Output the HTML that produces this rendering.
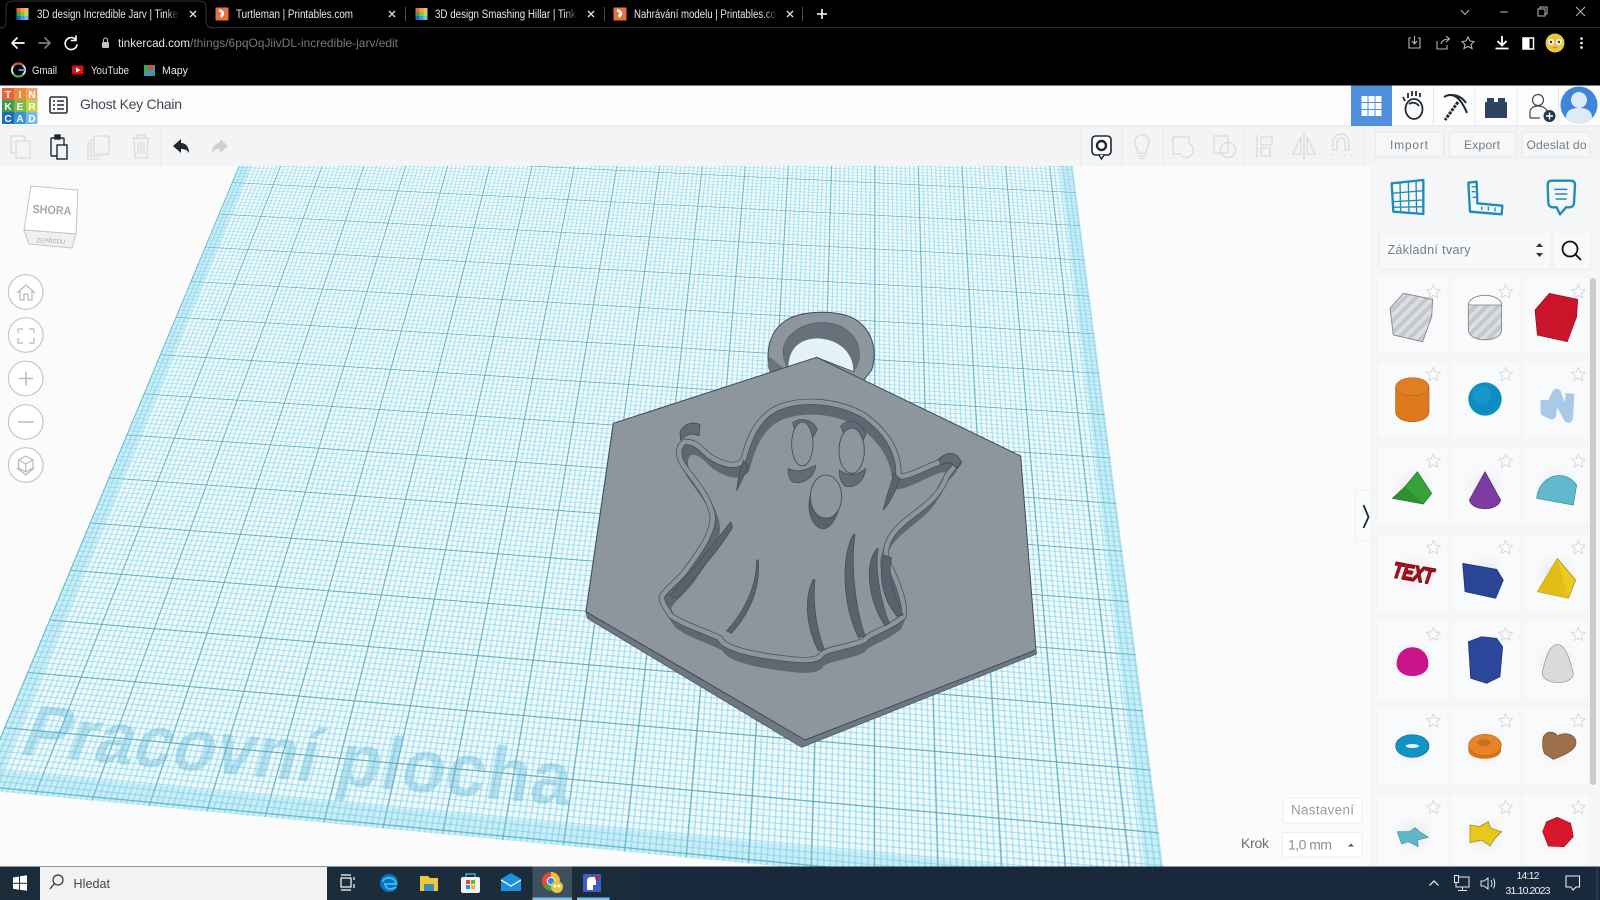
<!DOCTYPE html>
<html lang="cs"><head><meta charset="utf-8"><title>Ghost Key Chain</title>
<style>
html,body{margin:0;padding:0;width:1600px;height:900px;overflow:hidden;background:#fbfbfb;font-family:"Liberation Sans",sans-serif}
#wrap{position:absolute;left:0;top:0;width:1600px;height:900px;overflow:hidden;background:#fbfbfb}
#plane{position:absolute;left:0;top:0;width:2000px;height:2000px;transform-origin:0 0;
transform:matrix3d(.5484,.02106,0,-0.00003974,-.2452,.38066,0,-.00028,0,0,1,0,468.69,28.28,0,1.56);
background-color:#f4fbfd;
background-image:
linear-gradient(to right,rgba(70,160,178,.75) 0,rgba(70,160,178,.75) 2.2px,transparent 2.2px),
linear-gradient(to bottom,rgba(70,160,178,.75) 0,rgba(70,160,178,.75) 2.2px,transparent 2.2px),
linear-gradient(to right,rgba(110,205,230,.5) 0,rgba(110,205,230,.5) 2.4px,transparent 2.4px),
linear-gradient(to bottom,rgba(110,205,230,.5) 0,rgba(110,205,230,.5) 2.4px,transparent 2.4px);
background-size:102.4px 100px,102.4px 100px,10.24px 10px,10.24px 10px;
background-position:0 93px,0 93px,0 3px,0 3px}
.band{position:absolute;background:rgba(110,205,232,.3)}
#word{position:absolute;left:44px;top:1833px;font:bold 124px/124px "Liberation Sans",sans-serif;letter-spacing:1.5px;color:rgba(85,178,212,.36);white-space:nowrap}
svg#ui{position:absolute;left:0;top:0}
svg text{font-family:"Liberation Sans",sans-serif}
</style></head><body><div id="wrap">
<div id="plane">
<div class="band" style="left:0;top:0;width:30px;height:2000px"></div>
<div class="band" style="right:0;top:0;width:30px;height:2000px"></div>
<div class="band" style="left:0;bottom:0;width:2000px;height:34px"></div>
<div id="word">Pracovní plocha</div>
</div>
<svg id="ui" width="1600" height="900" viewBox="0 0 1600 900" xmlns="http://www.w3.org/2000/svg">
<defs>
<linearGradient id="fade"><stop offset="0" stop-color="#000" stop-opacity="0"/><stop offset="1" stop-color="#000"/></linearGradient>
<polygon id="st" points="0,-22 5.9,-8.1 20.9,-6.8 9.5,3.1 12.9,17.8 0,10 -12.9,17.8 -9.5,3.1 -20.9,-6.8 -5.9,-8.1" fill="#fbfbfb" stroke="#d8d9da" stroke-width="3"/>
<pattern id="stripe" width="24" height="24" patternUnits="userSpaceOnUse" patternTransform="rotate(45)"><rect width="24" height="24" fill="#dcdee0"/><rect width="12" height="24" fill="#c4c7cb"/></pattern>
<radialGradient id="blob"><stop offset="0" stop-color="#dfe1e2"/><stop offset="1" stop-color="#f8f9fa" stop-opacity="0"/></radialGradient>
<path id="ghost" fill="none" stroke-linejoin="round" d="M345,425 C325,435 320,465 340,495 C370,540 420,590 428,650 C430,700 385,760 345,815 C320,845 285,870 275,890 C275,915 295,930 300,945 C340,975 400,990 450,1015 C460,1045 550,1065 640,1075 C680,1080 730,1085 750,1070 C760,1045 830,1045 885,1020 C895,1000 960,985 1000,950 C1010,920 985,850 955,790 C935,745 960,700 1010,660 C1060,620 1110,590 1130,530 C1145,505 1160,495 1165,490 C1150,470 1120,480 1100,490 C1060,505 1020,530 985,530 C990,470 960,400 880,345 C810,305 700,290 620,325 C560,355 535,420 520,480 C500,505 460,495 420,470 C395,450 380,425 345,425 Z"/>
</defs>

<!-- PENDANT -->
<g transform="translate(570,300) scale(.33333)" stroke-linejoin="round">
<path d="M600,215 C585,150 600,90 650,60 C700,30 800,30 850,55 C905,85 925,150 905,210 L880,242 L600,215 Z" fill="#8d959d" stroke="#3f4b57" stroke-width="3"/>
<path d="M600,170 C590,190 590,205 605,220 L640,205Z" fill="#6b737d"/>
<path d="M640,155 C640,110 690,68 760,68 C820,68 868,110 868,165 C868,185 860,200 850,215 L740,172 L655,205 C645,190 640,175 640,155Z" fill="#e3f3f8" stroke="#3f4b57" stroke-width="2.500"/>
<path d="M640,155 C640,110 690,68 760,68 C820,68 868,110 868,165 C868,185 860,200 850,215 C852,170 820,120 745,115 C690,115 655,145 655,205 C645,190 640,175 640,155Z" fill="#68717b"/>
<polygon points="48,935 705,1320 1398,1050 1400,1062 695,1342 52,955" fill="#6f7781" stroke="#45515d" stroke-width="2"/>
<polygon points="740,172 1352,468 1398,1050 705,1320 48,935 130,370" fill="#8d959d" stroke="#3f4b57" stroke-width="3"/>
<g stroke="#5f6872" stroke-width="17">
<use href="#ghost" transform="translate(740,0) scale(.955,1) translate(-740,30)"/>
<use href="#ghost" transform="translate(740,0) scale(.97,1) translate(-740,20)"/>
<use href="#ghost" transform="translate(740,0) scale(.985,1) translate(-740,10)"/>
</g>
<use href="#ghost" stroke="#404b57" stroke-width="18"/>
<use href="#ghost" stroke="#8d959d" stroke-width="14"/>
<!-- hand ticks -->
<path d="M330,395 C345,368 370,365 390,373 L387,408 C370,398 350,400 332,420Z" fill="#626b75" stroke="#3f4b57" stroke-width="2.500"/>
<path d="M1105,478 C1130,455 1155,450 1174,485 L1160,505 C1145,485 1130,485 1115,495Z" fill="#626b75" stroke="#3f4b57" stroke-width="2.500"/>
<!-- inner strokes -->
<g fill="#5a636d" stroke="#3f4b57" stroke-width="2">
<path d="M500,572 C503,535 510,510 520,480 L535,500 C522,525 512,550 500,572Z"/>
<path d="M940,630 C948,590 962,555 972,520 L990,535 C978,572 962,605 940,630Z"/>
<path d="M482,665 C440,720 370,805 300,885 L322,895 C385,820 452,742 488,682Z"/>
<path d="M560,780 C560,860 520,940 470,992 L484,1000 C535,945 572,870 565,780Z"/>
<path d="M730,838 C698,900 712,990 745,1052 L764,1050 C738,990 728,900 735,840Z"/>
<path d="M850,703 C810,780 820,920 865,1012 L885,1008 C855,920 842,790 855,703Z"/>
<path d="M922,745 C880,790 895,900 945,978 L958,970 C930,900 914,800 925,745Z"/>
<path d="M945,765 C920,820 940,900 980,948 L1000,945 C975,890 950,830 965,775Z"/>
</g>
<!-- eyes -->
<path d="M668,368 C690,350 728,358 742,388 L730,410 C715,385 695,378 680,410Z" fill="#626b75" stroke="#3f4b57" stroke-width="2"/>
<ellipse cx="697" cy="432" rx="32" ry="66" fill="#8d959d" stroke="#3f4b57" stroke-width="2.500"/>
<path d="M655,505 C685,522 715,505 738,495 C732,535 700,552 670,547 C658,540 652,525 655,505Z" fill="#626b75" stroke="#3f4b57" stroke-width="2"/>
<path d="M812,378 C835,352 870,362 888,402 L880,420 C865,390 840,390 825,412Z" fill="#626b75" stroke="#3f4b57" stroke-width="2"/>
<ellipse cx="845" cy="452" rx="38" ry="68" fill="#8d959d" stroke="#3f4b57" stroke-width="2.500"/>
<path d="M808,510 C835,530 865,525 888,505 C882,545 855,568 825,558 C813,548 806,530 808,510Z" fill="#626b75" stroke="#3f4b57" stroke-width="2"/>
<!-- nose -->
<path d="M720,590 C710,632 725,682 760,687 C790,682 806,640 812,600Z" fill="#59626c" stroke="#3f4b57" stroke-width="2"/>
<ellipse cx="768" cy="590" rx="47" ry="65" fill="#8d959d" stroke="#3f4b57" stroke-width="2.500"/>
</g>

<!-- LEFT VIEW CONTROLS -->
<polygon points="31,186 78,190 76,234 24,230" fill="#fff" stroke="#c5c5c5"/>
<polygon points="24,230 76,234 72,248 29,244" fill="#f0f0f0" stroke="#c5c5c5"/>
<text x="52" y="214" font-size="12" font-weight="bold" fill="#a9a9a9" text-anchor="middle" textLength="39" lengthAdjust="spacingAndGlyphs" transform="rotate(3 52 210)">SHORA</text>
<text x="51" y="243" font-size="6" fill="#aaa" text-anchor="middle" transform="rotate(3 51 240)">ZEPŘEDU</text>
<g fill="#fff" stroke="#c6c6c6" stroke-width="1.200">
<circle cx="25.700" cy="292" r="17.300"/><circle cx="25.700" cy="335" r="17.300"/><circle cx="25.700" cy="378.500" r="17.300"/><circle cx="25.700" cy="422" r="17.300"/><circle cx="25.700" cy="465" r="17.300"/>
</g>
<g fill="none" stroke="#b8b8b8" stroke-width="1.200">
<path d="M17,293 L26,285 L35,293 M20,291 V300 H24 V294 H28 V300 H32 V291"/>
<path d="M18,333 V329 H23 M29,329 H34 V333 M34,338 V343 H29 M23,343 H18 V338"/>
<path d="M19,378.500 H33 M26,371.500 V385.500" stroke-width="1.500"/>
<path d="M18,422 H34" stroke-width="1.500"/>
<path d="M25.700,456 L33,460 V468 L25.700,472 L18.500,468 V460 Z M18.500,460 L25.700,464 L33,460 M25.700,464 V472 M17,468 L25.700,475 L34,468"/>
</g>

<!-- CHROME BAR -->
<rect x="0" y="0" width="1600" height="85.500" fill="#000"/>
<rect x="0" y="27" width="1600" height="1.200" fill="#2b2b2b"/>
<path d="M0,28 C5,28 6,25 6,20 V8 C6,3 8,1 12,1 H199 C204,1 206,3 206,8 V20 C206,25 208,28 213,28" fill="#000" stroke="#333" stroke-width="1"/>
<rect x="7" y="26.500" width="198" height="2" fill="#000"/>
<g stroke="#4a4a4a"><path d="M405.500,7 V21 M604.500,7 V21 M802.500,7 V21"/></g>
<!-- tab favicons -->
<g id="tk">
<rect x="16.500" y="8" width="4" height="4" fill="#ea6a3a"/><rect x="20.500" y="8" width="4" height="4" fill="#f0a040"/><rect x="24.500" y="8" width="4" height="4" fill="#f4b870"/>
<rect x="16.500" y="12" width="4" height="4" fill="#46a050"/><rect x="20.500" y="12" width="4" height="4" fill="#86c050"/><rect x="24.500" y="12" width="4" height="4" fill="#c0d850"/>
<rect x="16.500" y="16" width="4" height="4" fill="#2070b8"/><rect x="20.500" y="16" width="4" height="4" fill="#40a0d8"/><rect x="24.500" y="16" width="4" height="4" fill="#70c0e8"/>
</g>
<use href="#tk" x="399"/>
<rect x="215.500" y="7.500" width="13" height="13" fill="#e8703a"/><path d="M219,9 C225,10 226,15 221,18 L220,15 C222,14 222,12 219,12Z" fill="#fff"/>
<rect x="613.500" y="7.500" width="13" height="13" fill="#e8703a"/><path d="M617,9 C623,10 624,15 619,18 L618,15 C620,14 620,12 617,12Z" fill="#fff"/>
<g font-size="11.500" fill="#e8e8e8">
<text x="37" y="18" textLength="141" lengthAdjust="spacingAndGlyphs">3D design Incredible Jarv | Tinke</text>
<text x="236" y="18" textLength="117" lengthAdjust="spacingAndGlyphs">Turtleman | Printables.com</text>
<text x="435" y="18" textLength="141" lengthAdjust="spacingAndGlyphs">3D design Smashing Hillar | Tink</text>
<text x="634" y="18" textLength="142" lengthAdjust="spacingAndGlyphs">Nahrávání modelu | Printables.co</text>
</g>
<rect x="166" y="6" width="13" height="16" fill="url(#fade)"/><rect x="565" y="6" width="12" height="16" fill="url(#fade)"/><rect x="764" y="6" width="13" height="16" fill="url(#fade)"/>
<g stroke="#e6e6e6" stroke-width="1.300"><path d="M190,11 L196,17 M196,11 L190,17 M389,11 L395,17 M395,11 L389,17 M588,11 L594,17 M594,11 L588,17 M787,11 L793,17 M793,11 L787,17"/></g>
<path d="M817,14 H827 M822,9 V19" stroke="#fff" stroke-width="1.600"/>
<g stroke="#b8b8b8" fill="none" stroke-width="1">
<path d="M1461,10 L1465,14.500 L1469,10"/>
<path d="M1500,12 H1508"/>
<path d="M1538,9 H1545 V16 H1538 Z M1540,9 V7 H1547 V14 H1545"/>
<path d="M1576,7 L1585,16 M1585,7 L1576,16"/>
</g>
<!-- nav -->
<g fill="none" stroke-linecap="round">
<path d="M12,43 H24 M12,43 L17,38 M12,43 L17,48" stroke="#fff" stroke-width="1.700"/>
<path d="M39,43 H50 M50,43 L45,38 M50,43 L45,48" stroke="#7c7c7c" stroke-width="1.700"/>
<path d="M76,40 A6,6 0 1 0 77,45 M76,36 V40.500 H71.500" stroke="#fff" stroke-width="1.600"/>
</g>
<rect x="102" y="42" width="7" height="6" rx="1" fill="#c0c0c0"/><path d="M103.500,42 V40 A2,2 0 0 1 107.500,40 V42" fill="none" stroke="#c0c0c0" stroke-width="1"/>
<text x="118" y="47" font-size="12" fill="#e6e6e6" textLength="72" lengthAdjust="spacingAndGlyphs">tinkercad.com</text>
<text x="190" y="47" font-size="12" fill="#7a7a7a" textLength="208" lengthAdjust="spacingAndGlyphs">/things/6pqOqJiivDL-incredible-jarv/edit</text>
<!-- chrome right icons -->
<g fill="none" stroke="#b5b5b5" stroke-width="1.100">
<path d="M1411,38 H1409 V48 H1420 V38 H1418 M1414.500,36 V43 M1412,41 L1414.500,44 L1417,41"/>
<path d="M1437,41 V49 H1447 V45 M1441,44 C1442,40 1445,39 1449,39 M1446,36 L1449.500,39 L1446,42"/>
<path d="M1468,37 L1470,41 L1474,41.500 L1471,44.500 L1472,48.500 L1468,46.500 L1464,48.500 L1465,44.500 L1462,41.500 L1466,41Z"/>
</g>
<path d="M1502,36 V45 M1497.500,41 L1502,45.500 L1506.500,41 M1495.500,48.500 H1508.500" fill="none" stroke="#fff" stroke-width="1.800"/>
<rect x="1523" y="38" width="10.500" height="11" fill="none" stroke="#fff" stroke-width="1.500"/><rect x="1523" y="38" width="6.500" height="11" fill="#fff"/>
<circle cx="1555" cy="43" r="9.500" fill="#e8c840"/><circle cx="1551" cy="42" r="3" fill="#f5f5f5"/><circle cx="1559" cy="42" r="3" fill="#f5f5f5"/><circle cx="1551" cy="42" r="1.200" fill="#333"/><circle cx="1559" cy="42" r="1.200" fill="#333"/><path d="M1552,47 Q1555,50 1558,47" fill="#e88020"/>
<g fill="#fff"><circle cx="1581.500" cy="38.500" r="1.300"/><circle cx="1581.500" cy="43" r="1.300"/><circle cx="1581.500" cy="47.500" r="1.300"/></g>
<!-- bookmarks -->
<circle cx="18.500" cy="70" r="6.500" fill="none" stroke="#ddd" stroke-width="2"/><path d="M18.500,70 H25" stroke="#4a90e0" stroke-width="2"/><path d="M13,66 A6.500,6.500 0 0 1 23,65.500" fill="none" stroke="#e04a3a" stroke-width="2"/><path d="M13,74 A6.500,6.500 0 0 0 23,74.500" fill="none" stroke="#50a050" stroke-width="2"/>
<text x="32" y="74" font-size="11" fill="#e8e8e8" textLength="25" lengthAdjust="spacingAndGlyphs">Gmail</text>
<rect x="72" y="65.500" width="11.500" height="9" rx="2" fill="#e01010"/><path d="M76,67.500 L80.500,70 L76,72.500Z" fill="#fff"/>
<text x="91" y="74" font-size="11" fill="#e8e8e8" textLength="38" lengthAdjust="spacingAndGlyphs">YouTube</text>
<path d="M144,65 L155,65 L155,76 L144,76Z" fill="#38a860"/><path d="M144,76 L155,65 L155,70 L149,76Z" fill="#4a90e0"/><circle cx="151" cy="67.500" r="2.800" fill="#e04a3a"/>
<text x="162" y="74" font-size="11" fill="#e8e8e8" textLength="26" lengthAdjust="spacingAndGlyphs">Mapy</text>

<!-- HEADER -->
<rect x="0" y="85.500" width="1600" height="40.500" fill="#fcfcfc"/>
<rect x="0" y="125.500" width="1600" height="1" fill="#e4e5e6"/>
<g font-size="10" font-weight="bold" fill="#fff" text-anchor="middle">
<rect x="2" y="88" width="12" height="12" fill="#e8643a"/><text x="8" y="98">T</text>
<rect x="14" y="88" width="12" height="12" fill="#ee8a3c"/><text x="20" y="98">I</text>
<rect x="26" y="88" width="11.500" height="12" fill="#f2a368"/><text x="32" y="98">N</text>
<rect x="2" y="100" width="12" height="12" fill="#3f9b50"/><text x="8" y="110">K</text>
<rect x="14" y="100" width="12" height="12" fill="#7db84a"/><text x="20" y="110">E</text>
<rect x="26" y="100" width="11.500" height="12" fill="#bcd44a"/><text x="32" y="110">R</text>
<rect x="2" y="112" width="12" height="12" fill="#1f6eb4"/><text x="8" y="122">C</text>
<rect x="14" y="112" width="12" height="12" fill="#3b96d6"/><text x="20" y="122">A</text>
<rect x="26" y="112" width="11.500" height="12" fill="#71bde4"/><text x="32" y="122">D</text>
</g>
<rect x="50" y="97" width="17" height="16" rx="1.500" fill="none" stroke="#2a2f36" stroke-width="1.600"/>
<path d="M53,101 H55 M57,101 H64 M53,105 H55 M57,105 H64 M53,109 H55 M57,109 H64" stroke="#2a2f36" stroke-width="1.400"/>
<text x="80" y="109" font-size="14" fill="#3e4852" textLength="102">Ghost Key Chain</text>
<rect x="1351" y="85.500" width="41" height="40.500" fill="#508fdc"/>
<g fill="#fff"><rect x="1361.500" y="96" width="6" height="6"/><rect x="1368.500" y="96" width="6" height="6"/><rect x="1375.500" y="96" width="6" height="6"/><rect x="1361.500" y="103" width="6" height="6"/><rect x="1368.500" y="103" width="6" height="6"/><rect x="1375.500" y="103" width="6" height="6"/><rect x="1361.500" y="110" width="6" height="6"/><rect x="1368.500" y="110" width="6" height="6"/><rect x="1375.500" y="110" width="6" height="6"/></g>
<path d="M1433.500,86 V126 M1475,86 V126 M1517,86 V126 M1558.500,86 V126" stroke="#e9eaeb"/>
<g fill="none" stroke="#1e2a36" stroke-width="1.800">
<ellipse cx="1414" cy="109" rx="8.500" ry="10"/><path d="M1409,104 C1412,102 1416,102 1419,106"/><path d="M1408,98 V93 M1412,96 V91 M1416,96 V91 M1420,97 V93 M1405,101 L1403,97"/>
<path d="M1444,97 C1452,92 1460,96 1467,113 M1451,95 C1457,95 1462,97 1466,103" stroke-width="2"/><path d="M1458,102 L1445,120" stroke-width="3" stroke-dasharray="3 1"/>
</g>
<path d="M1485,102 H1487 V98 H1494 V102 H1498 V98 H1505 V102 H1507 V118 H1485Z" fill="#2c4460"/>
<g fill="none" stroke="#3e4852" stroke-width="1.200"><circle cx="1538" cy="100" r="5.500"/><path d="M1530,118 V112 C1530,108 1534,106 1538,106 C1542,106 1546,108 1547,111 M1530,118 H1540"/></g>
<circle cx="1549.500" cy="116" r="6" fill="#24384c"/><path d="M1546,116 H1553 M1549.500,112.500 V119.500" stroke="#fff" stroke-width="1.400"/>
<circle cx="1579" cy="105" r="18.500" fill="#3f86d8"/><circle cx="1579" cy="100" r="8" fill="#dfeaf8"/><path d="M1566,118 C1566,110 1572,108 1579,108 C1586,108 1592,110 1592,118 A18,18 0 0 1 1566,118Z" fill="#dfeaf8"/>

<!-- TOOLBAR -->
<rect x="0" y="126.500" width="1600" height="39.500" fill="#f3f4f5"/>
<path d="M161,127 V166 M1081,127 V166 M1122,127 V166 M1163,127 V166 M1244,127 V166 M1364,127 V166" stroke="#e8e9ea"/>
<g fill="none" stroke="#d9dadb" stroke-width="1.300">
<rect x="11" y="136" width="14" height="17"/><rect x="16" y="141" width="14" height="17" fill="#f3f4f5"/>
<rect x="94" y="136" width="15" height="18" rx="1"/><path d="M94,140 H91 V156 H103 M90,143 H88 V159 H100"/>
<path d="M132,138 H150 M137,138 V135 H145 V138 M134,138 L135,158 H147 L148,138 M138,142 V154 M141,142 V154 M144,142 V154"/>
</g>
<g fill="none" stroke="#20272e" stroke-width="1.400"><rect x="51" y="138" width="13" height="18" rx="1"/><rect x="55" y="135" width="5" height="4" fill="#20272e"/><rect x="57" y="145" width="10" height="14" fill="#f3f4f5"/></g>
<path d="M173,146 L181,139 V143 C186,143 189,147 189,153 C187,150 185,149 181,149 V153Z" fill="#20272e"/>
<path d="M228,146 L220,139 V143 C215,143 212,147 212,153 C214,150 216,149 220,149 V153Z" fill="#cfd0d1"/>
<g>
<rect x="1092" y="136" width="19" height="19" rx="3.500" fill="#fff" stroke="#20272e" stroke-width="1.600"/><path d="M1099,155 L1101.500,159 L1104,155" fill="#fff" stroke="#20272e" stroke-width="1.500"/><circle cx="1101.500" cy="145.500" r="4.500" fill="none" stroke="#20272e" stroke-width="2.400"/>
</g>
<g fill="none" stroke="#d9dadb" stroke-width="1.300">
<path d="M1137,149 C1132,140 1137,135 1142,135 C1147,135 1152,140 1147,149 L1146,153 H1138Z M1138,156 H1146 M1139,158.500 H1145"/>
<path d="M1173,137 H1189 V144 M1173,137 V154 H1182 M1189,144 A7,7 0 1 1 1182,156"/>
<rect x="1214" y="136" width="14" height="17"/><circle cx="1228" cy="150" r="7.500"/>
<path d="M1257,135 V158 M1261,137 H1272 V145 H1261Z M1261,148 H1270 V156 H1261Z"/>
<path d="M1304,133 V160 M1301,137 L1293,154 H1301Z M1307,137 L1315,154 H1307Z"/>
<path d="M1333,150 V142 A8,8 0 0 1 1349,142 V150 H1345 V142 A4,4 0 0 0 1337,142 V150Z M1332,154 L1333,156 M1338,155 L1339,156 M1345,155 L1346,156 M1351,154 L1352,156"/>
</g>
<g fill="#f6f7f8" stroke="#e7e8e9"><rect x="1375.500" y="132" width="68" height="25" rx="2"/><rect x="1449" y="132" width="67" height="25" rx="2"/><rect x="1522" y="132" width="68" height="25" rx="2"/></g>
<g font-size="12" fill="#737b83">
<text x="1390" y="149" textLength="38">Import</text>
<text x="1464" y="149" textLength="36">Export</text>
<text x="1526.500" y="149" textLength="60">Odeslat do</text>
</g>

<!-- RIGHT PANEL -->
<rect x="1370" y="166" width="230" height="701" fill="#f5f6f7"/>
<g fill="none" stroke="#1e8db5" transform="translate(1360,170) scale(.33333)" stroke-linejoin="round">
<g stroke-width="7"><path d="M95,40 L190,30 L190,132 L100,125Z"/><path d="M95,70 L190,62 M97,95 L190,90 M98,112 L190,110 M120,37 L122,127 M145,35 L147,129 M168,32 L170,130" stroke-width="4"/></g>
<path d="M325,38 L350,35 L352,100 L427,107 L425,133 L330,125Z" stroke-width="7"/><path d="M335,50 H350 M335,65 H346 M338,82 H350 M365,120 V110 M385,122 V110 M405,124 V112" stroke-width="4"/>
<path d="M575,32 H632 Q645,32 645,45 L642,100 Q640,112 628,112 H618 L600,133 L590,112 H577 Q565,110 565,98 L563,45 Q563,32 575,32Z" stroke-width="7"/><path d="M583,58 H622 M585,72 H622 M587,87 H620" stroke-width="4.500"/>
</g>
<rect x="1379" y="232" width="172" height="37" rx="2" fill="#f8f9fa" stroke="#eceded"/>
<rect x="1553" y="232" width="38" height="37" rx="2" fill="#f8f9fa" stroke="#eceded"/>
<text x="1387.500" y="254" font-size="12.500" fill="#757c84" textLength="83">Základní tvary</text>
<path d="M1536,247 L1539.500,243 L1543,247Z M1536,253 L1539.500,257 L1543,253Z" fill="#333"/>
<circle cx="1570" cy="249" r="7.500" fill="none" stroke="#111" stroke-width="1.800"/><path d="M1575.500,254.500 L1581,260" stroke="#111" stroke-width="1.900"/>
<rect x="1590" y="278" width="6" height="507" rx="3" fill="#c9cbcc"/>
<g fill="#f9fafb">
<rect x="1378" y="278" width="69" height="75"/><rect x="1451" y="278" width="68" height="75"/><rect x="1523" y="278" width="66" height="75"/>
<rect x="1378" y="362" width="69" height="76"/><rect x="1451" y="362" width="68" height="76"/><rect x="1523" y="362" width="66" height="76"/>
<rect x="1378" y="448" width="69" height="76"/><rect x="1451" y="448" width="68" height="76"/><rect x="1523" y="448" width="66" height="76"/>
<rect x="1378" y="535" width="69" height="75"/><rect x="1451" y="535" width="68" height="75"/><rect x="1523" y="535" width="66" height="75"/>
<rect x="1378" y="622" width="69" height="76"/><rect x="1451" y="622" width="68" height="76"/><rect x="1523" y="622" width="66" height="76"/>
<rect x="1378" y="708" width="69" height="76"/><rect x="1451" y="708" width="68" height="76"/><rect x="1523" y="708" width="66" height="76"/>
<rect x="1378" y="795" width="69" height="72"/><rect x="1451" y="795" width="68" height="72"/><rect x="1523" y="795" width="66" height="72"/>
</g>
<!-- rows 1-3 shapes -->
<g transform="translate(1360,170) scale(.33333)" stroke-linejoin="round">
<ellipse cx="160" cy="950" rx="80" ry="70" fill="url(#blob)"/><ellipse cx="375" cy="950" rx="80" ry="70" fill="url(#blob)"/><ellipse cx="590" cy="950" rx="80" ry="70" fill="url(#blob)"/>
<use href="#st" x="220" y="366"/><use href="#st" x="437" y="366"/><use href="#st" x="655" y="366"/>
<use href="#st" x="220" y="614"/><use href="#st" x="437" y="614"/><use href="#st" x="655" y="614"/>
<use href="#st" x="220" y="874"/><use href="#st" x="437" y="874"/><use href="#st" x="655" y="874"/>
<polygon points="130,370 218,388 215,440 188,515 100,495 90,415" fill="url(#stripe)" stroke="#7d8186" stroke-width="2.500"/>
<path d="M325,405 V478 C325,520 425,520 425,478 V405Z" fill="url(#stripe)" stroke="#7d8186" stroke-width="2.500"/><path d="M325,405 A50,29 0 0 1 425,405" fill="none" stroke="#7d8186" stroke-width="2.500"/>
<polygon points="568,370 653,388 650,440 622,515 532,495 525,420" fill="#c9142a" stroke="#8e0f20" stroke-width="2"/>
<path d="M107,650 V725 C107,765 207,765 207,725 V650Z" fill="#dd7a1e" stroke="#a85a12" stroke-width="2"/><ellipse cx="157" cy="650" rx="50" ry="27" fill="#e07f22" stroke="#a85a12" stroke-width="1.500"/>
<circle cx="375" cy="687" r="50" fill="#0e8dc2"/><circle cx="365" cy="675" r="28" fill="#1c9dd0" opacity=".6"/>
<path d="M555,690 L555,725 L575,735 L580,690 L590,670 L605,710 L625,745 L630,670" fill="none" stroke="#a9c9e8" stroke-width="27" stroke-linejoin="round"/>
<polygon points="172,905 215,970 190,1002 97,985 135,950" fill="#38a23a" stroke="#1f6e24" stroke-width="2"/><polygon points="135,950 190,1002 97,985" fill="#2f8e32"/>
<path d="M375,905 L328,990 C335,1025 415,1025 422,990Z" fill="#7d3aa0" stroke="#5a2878" stroke-width="2"/>
<path d="M530,985 C535,920 610,890 650,945 L640,1005 L530,985Z" fill="#62b9cd" stroke="#3c8a9c" stroke-width="2"/>
</g>
<!-- rows 4-7 shapes -->
<g transform="translate(1360,530) scale(.33333)" stroke-linejoin="round">
<ellipse cx="160" cy="130" rx="80" ry="70" fill="url(#blob)"/><ellipse cx="375" cy="130" rx="80" ry="70" fill="url(#blob)"/><ellipse cx="590" cy="130" rx="80" ry="70" fill="url(#blob)"/>
<ellipse cx="160" cy="395" rx="80" ry="70" fill="url(#blob)"/><ellipse cx="590" cy="395" rx="80" ry="70" fill="url(#blob)"/>
<ellipse cx="160" cy="650" rx="80" ry="70" fill="url(#blob)"/><ellipse cx="375" cy="650" rx="80" ry="70" fill="url(#blob)"/><ellipse cx="590" cy="650" rx="80" ry="70" fill="url(#blob)"/>
<ellipse cx="160" cy="915" rx="80" ry="70" fill="url(#blob)"/><ellipse cx="375" cy="915" rx="80" ry="70" fill="url(#blob)"/><ellipse cx="590" cy="915" rx="80" ry="70" fill="url(#blob)"/>
<use href="#st" x="220" y="53"/><use href="#st" x="437" y="53"/><use href="#st" x="655" y="53"/>
<use href="#st" x="220" y="314"/><use href="#st" x="437" y="314"/><use href="#st" x="655" y="314"/>
<use href="#st" x="220" y="573"/><use href="#st" x="437" y="573"/><use href="#st" x="655" y="573"/>
<use href="#st" x="220" y="833"/><use href="#st" x="437" y="833"/><use href="#st" x="655" y="833"/>
<text x="160" y="152" font-size="66" font-weight="bold" font-style="italic" fill="#c3121f" stroke="#8a0d17" stroke-width="5" text-anchor="middle" textLength="122" lengthAdjust="spacingAndGlyphs" transform="rotate(10 160 130)">TEXT</text>
<polygon points="308,100 410,118 430,150 407,205 315,185" fill="#2a4496" stroke="#1a2e70" stroke-width="2"/>
<polygon points="592,85 647,150 625,205 532,185" fill="#edc91e" stroke="#9e8a14" stroke-width="2"/><polygon points="592,85 625,205 532,185" fill="#e4bc18"/>
<path d="M110,402 C110,335 205,335 205,402 C205,450 110,450 110,402Z" fill="#c9148c"/>
<polygon points="325,335 365,320 410,325 428,350 420,440 380,460 332,445" fill="#2c4799" stroke="#1a2e70" stroke-width="2"/>
<path d="M592,343 C565,345 555,395 547,425 C540,465 640,470 640,430 C630,395 620,345 592,343Z" fill="#d9dadc" stroke="#8f9296" stroke-width="2"/>
<ellipse cx="157" cy="648" rx="50" ry="34" fill="#1093c6" stroke="#0a6b92" stroke-width="2"/><ellipse cx="157" cy="648" rx="20" ry="6" fill="#eef6fa"/>
<path d="M325,650 V660 C325,695 423,695 423,660 V650Z" fill="#d4741a"/><ellipse cx="375" cy="645" rx="49" ry="32" fill="#e58527" stroke="#a85a12" stroke-width="1.500"/><ellipse cx="372" cy="638" rx="20" ry="10" fill="#c96f16"/>
<path d="M550,620 C565,595 590,610 592,618 C610,605 650,610 648,640 C645,665 600,680 580,688 L553,670 C545,650 548,630 550,620Z" fill="#9c7048" stroke="#6e4e30" stroke-width="2"/>
<polygon points="112,905 150,905 165,893 178,905 205,922 172,930 175,950 145,935 125,942" fill="#5fb8c8" stroke="#3c8a9c" stroke-width="2"/>
<polygon points="330,885 358,890 385,875 392,895 425,905 405,925 390,948 365,930 330,938" fill="#e9c81e" stroke="#8e7c14" stroke-width="2"/>
<polygon points="592,862 632,880 640,920 612,950 565,948 548,905 560,875" fill="#d8172c" stroke="#8e0f20" stroke-width="2"/>
</g>
<!-- chevron tab -->
<rect x="1355" y="490" width="16" height="51" fill="#fafbfb" stroke="#eef0f0"/>
<path d="M1363.500,505 L1368.500,517 L1363.500,528" fill="none" stroke="#1c2a36" stroke-width="1.800"/>
<!-- bottom controls -->
<rect x="1283.500" y="798" width="78.500" height="25" rx="2" fill="#fff" stroke="#eee"/>
<text x="1291" y="814.500" font-size="13.500" fill="#9a9a9a" textLength="63">Nastavení</text>
<text x="1241" y="848" font-size="14" fill="#6a6f74" textLength="28">Krok</text>
<rect x="1282" y="832.500" width="80" height="24.500" rx="2" fill="#fff" stroke="#eee"/>
<text x="1288" y="849.500" font-size="14" fill="#8f8f8f" textLength="44">1,0 mm</text>
<path d="M1348,846.500 L1351,843.500 L1354,846.500Z" fill="#555"/>

<!-- TASKBAR -->
<rect x="0" y="866.500" width="1600" height="33.500" fill="#17293b"/>
<rect x="0" y="866.500" width="640" height="33.500" fill="#1b2d3a"/>
<g fill="#fff"><path d="M13,877.500 L19,876.500 V882.700 H13Z M20,876.300 L27,875.200 V882.700 H20Z M13,883.700 H19 V889.700 L13,888.700Z M20,883.700 H27 V890.800 L20,889.800Z"/></g>
<rect x="40" y="867" width="287" height="33" fill="#f2f2f2"/>
<circle cx="58" cy="880" r="5" fill="none" stroke="#333" stroke-width="1.200"/><path d="M54,884 L50,889" stroke="#333" stroke-width="1.300"/>
<text x="73.500" y="888" font-size="12.500" fill="#444" textLength="36.500">Hledat</text>
<g fill="none" stroke="#fff" stroke-width="1.200"><rect x="341" y="878" width="10" height="9"/><path d="M341,875 H351 M341,890 H351 M354,877 V880 M354,884 V888"/></g>
<circle cx="389" cy="883" r="9" fill="#0f6cc4"/><path d="M383,882 C383,876 396,876 396,884 H385 C386,890 392,890 396,887" fill="none" stroke="#2fc0e8" stroke-width="2"/>
<path d="M420,876 H428 L430,878 H438 V891 H420Z" fill="#f0c840"/><rect x="424" y="884" width="10" height="7" fill="#3f8cb8"/>
<rect x="461" y="877" width="19" height="16" rx="2" fill="#f2f2f2"/><path d="M466,877 V874 H475 V877" fill="none" stroke="#3fa8d8" stroke-width="1.400"/><rect x="466" y="880" width="4" height="4" fill="#e84a20"/><rect x="471" y="880" width="4" height="4" fill="#70b030"/><rect x="466" y="885" width="4" height="4" fill="#2a90e0"/><rect x="471" y="885" width="4" height="4" fill="#f0b820"/>
<path d="M501,879 L511,873 L521,879 V891 H501Z" fill="#1f90e0"/><path d="M501,880 L511,886 L521,880" fill="none" stroke="#fff" stroke-width="1.300"/>
<rect x="532.500" y="866.500" width="39.500" height="33.500" fill="#3e505e"/>
<circle cx="551" cy="881" r="9" fill="#e04a3a"/><path d="M551,881 L544,887 A9,9 0 0 0 558,888Z" fill="#3fa84f"/><path d="M551,872 A9,9 0 0 1 560,881 L551,881Z" fill="#f0c030"/><circle cx="551" cy="881" r="3.800" fill="#3f86e0" stroke="#fff"/>
<circle cx="557" cy="887" r="6" fill="#e8c840"/><circle cx="555" cy="886" r="1.500" fill="#fff"/><circle cx="559" cy="886" r="1.500" fill="#fff"/>
<rect x="583" y="874" width="18" height="18" rx="1" fill="#3f5cc8"/><path d="M587,890 V881 Q587,877 591,877 H596 V885 H593 V890Z" fill="#fff"/><circle cx="597" cy="878" r="2" fill="#c8203a"/>
<rect x="532.500" y="897.500" width="39.500" height="2.500" fill="#7cc0ee"/><rect x="577" y="897.500" width="32.500" height="2.500" fill="#7cc0ee"/>
<path d="M1429.500,885.500 L1434,881 L1438.500,885.500" fill="none" stroke="#fff" stroke-width="1.200"/>
<g fill="none" stroke="#e8e8e8" stroke-width="1"><rect x="1456" y="877" width="13" height="10"/><rect x="1454.500" y="875.500" width="4" height="7" fill="#17293b"/><path d="M1462.500,887 V890 M1458,890.500 H1467"/>
<path d="M1481,881 H1484 L1488,878 V889 L1484,886 H1481Z M1491,880 Q1493,883.500 1491,887 M1493.500,878.500 Q1496,883.500 1493.500,888.500"/></g>
<text x="1528" y="879" font-size="10.500" fill="#f0f0f0" text-anchor="middle" textLength="23">14:12</text>
<text x="1528" y="894" font-size="10.500" fill="#f0f0f0" text-anchor="middle" textLength="45">31.10.2023</text>
<path d="M1566,876 H1579.500 V887 H1576 L1573,890 L1571,887 H1566Z" fill="none" stroke="#f0f0f0" stroke-width="1.100"/>
<path d="M1597,867 V900" stroke="#3a4a5a"/>
</svg>
</div></body></html>
